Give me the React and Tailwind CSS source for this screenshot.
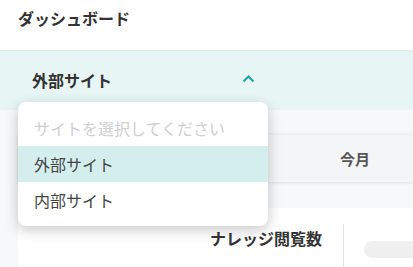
export default function App() {
  const font = { fontFamily: '"Noto Sans CJK JP", "Noto Sans", sans-serif' };
  return (
    <div className="relative w-[413px] h-[267px] overflow-hidden bg-[#f7f8fa]" style={font}>
      <div className="h-[50px] bg-white flex items-start pt-[10px] px-[18px] shadow-[0_1px_2px_rgba(0,0,0,0.06)] relative z-10">
        <span className="text-[16px] font-bold text-[#333] leading-[16px]">ダッシュボード</span>
      </div>
      <div className="h-[60px] bg-[#e7f5f5] flex items-center pl-[32px]">
        <div className="w-[224px] flex items-center justify-between">
          <span className="text-[16px] font-bold text-[#333] leading-none">外部サイト</span>
          <svg width="13" height="8" viewBox="0 0 13 8" className="mr-[1px] mt-[-3px]">
            <path d="M1.5 6.5 L6.5 1.5 L11.5 6.5" fill="none" stroke="#20a8a4" strokeWidth="2.2" />
          </svg>
        </div>
      </div>
      <div className="pt-[25px] pl-[18px] flex flex-col gap-[26px]">
        <div className="h-[47px] bg-[#f4f5f7] shadow-[0_-1px_4px_rgba(0,0,0,0.06),0_1px_3px_rgba(0,0,0,0.08)] flex items-center">
          <span className="ml-[322px] text-[15px] font-bold text-[#555] leading-none">今月</span>
        </div>
        <div className="h-[80px] bg-white flex items-start">
          <div className="w-[304px] shrink-0 flex justify-end pt-[22px]">
            <span className="text-[16px] font-bold text-[#333] leading-none">ナレッジ閲覧数</span>
          </div>
          <div className="shrink-0 ml-[21px] mt-[16px] w-px h-[60px] bg-[#e2e2e2]" />
          <div className="shrink-0 ml-[20px] mt-[33px] w-[80px] h-[17px] rounded-full bg-[#f0f0f0]" />
        </div>
      </div>
      <div className="absolute left-[18px] top-[102px] w-[250px] h-[124px] bg-white rounded-[8px] shadow-[0_4px_14px_rgba(0,0,0,0.22)] overflow-hidden flex flex-col py-[8px]">
        <div className="h-[36px] flex items-center px-[16px] text-[16px] text-[#cfcfcf]">サイトを選択してください</div>
        <div className="h-[36px] flex items-center px-[16px] text-[16px] text-[#444] bg-[#d4eeee]">外部サイト</div>
        <div className="h-[36px] flex items-center px-[16px] text-[16px] text-[#444]">内部サイト</div>
      </div>
    </div>
  );
}
